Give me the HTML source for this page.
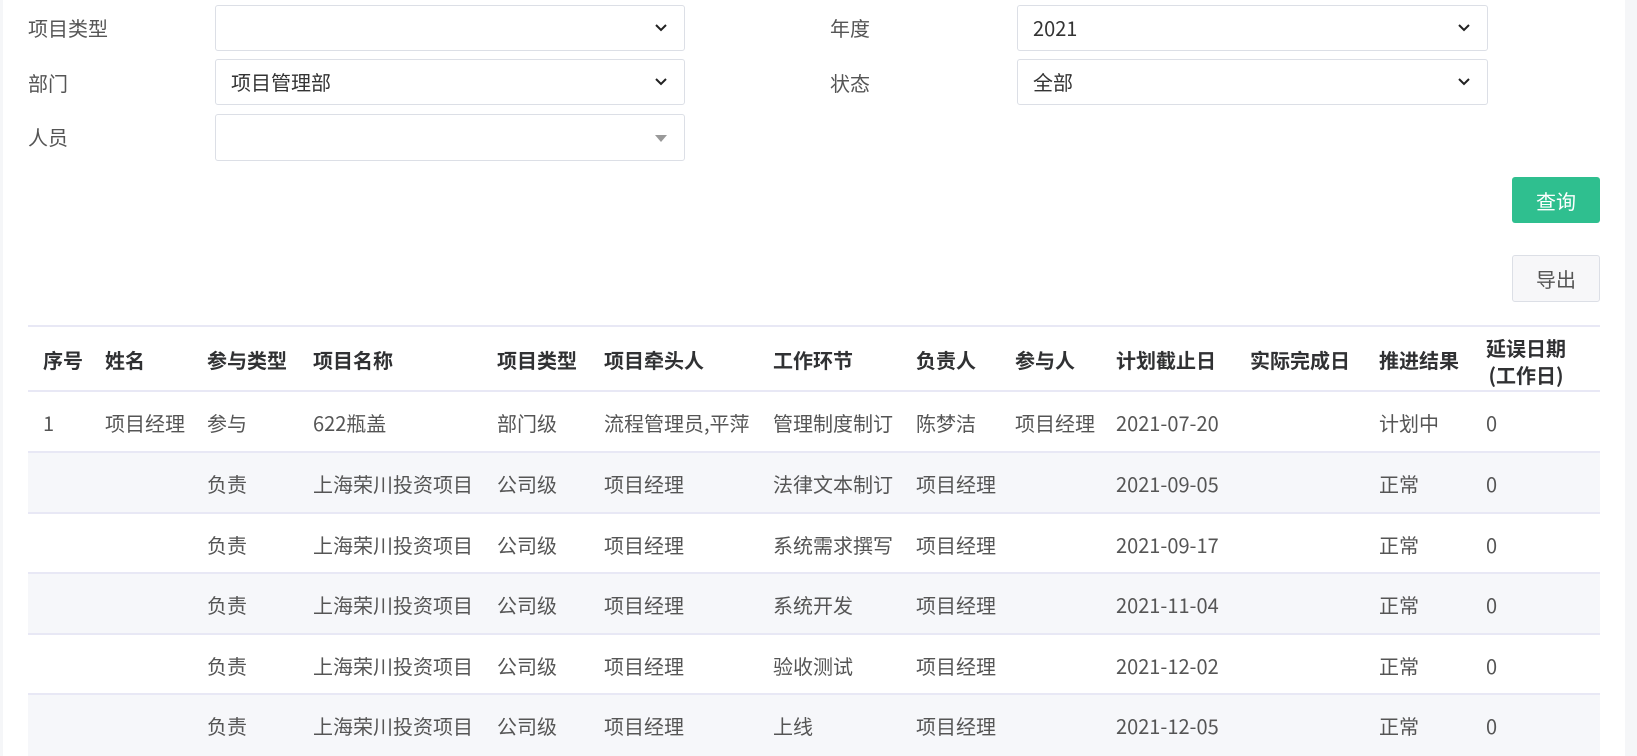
<!DOCTYPE html>
<html><head><meta charset="utf-8"><style>
*{box-sizing:border-box;margin:0;padding:0}
body{width:1637px;height:756px;overflow:hidden;background:#fff;font-family:"Noto Sans CJK SC","Liberation Sans",sans-serif;font-size:20px;color:#555;position:relative}
.abs{position:absolute}
.lbl{position:absolute;color:#555;line-height:24px}
.sel{position:absolute;border:1px solid #dcdfe6;border-radius:3px;background:#fff;color:#333;padding-left:15px;display:flex;align-items:center;line-height:24px}
.chev{position:absolute;right:16px;top:50%;margin-top:-6px}
.btn{position:absolute;border-radius:3px;display:flex;align-items:center;justify-content:center}
.row{position:absolute;left:28px;width:1572px;border-bottom:2px solid #e8e8f5}
.c{position:absolute;white-space:nowrap;line-height:24px}
.h .c{font-weight:bold;color:#303133}
</style></head><body>
<div class="abs" style="left:1625px;top:0;width:12px;height:756px;background:#f5f6f8"></div>
<div class="abs" style="left:0;top:0;width:3px;height:756px;background:#f5f6f8"></div>

<div class="lbl" style="left:28px;top:16px">项目类型</div>
<div class="sel" style="left:215px;top:5px;width:470px;height:46px"><svg class="chev" width="14" height="12" viewBox="0 0 14 12"><path d="M2 3l5 5 5-5" stroke="#222" stroke-width="2" fill="none"/></svg></div>
<div class="lbl" style="left:28px;top:71px">部门</div>
<div class="sel" style="left:215px;top:59px;width:470px;height:46px">项目管理部<svg class="chev" width="14" height="12" viewBox="0 0 14 12"><path d="M2 3l5 5 5-5" stroke="#222" stroke-width="2" fill="none"/></svg></div>
<div class="lbl" style="left:28px;top:125px">人员</div>
<div class="sel" style="left:215px;top:114px;width:470px;height:47px"><svg class="chev" width="14" height="12" viewBox="0 0 14 12"><path d="M1 3h12l-6 7z" fill="#999"/></svg></div>

<div class="lbl" style="left:830px;top:16px">年度</div>
<div class="sel" style="left:1017px;top:5px;width:471px;height:46px">2021<svg class="chev" width="14" height="12" viewBox="0 0 14 12"><path d="M2 3l5 5 5-5" stroke="#222" stroke-width="2" fill="none"/></svg></div>
<div class="lbl" style="left:830px;top:71px">状态</div>
<div class="sel" style="left:1017px;top:59px;width:471px;height:46px">全部<svg class="chev" width="14" height="12" viewBox="0 0 14 12"><path d="M2 3l5 5 5-5" stroke="#222" stroke-width="2" fill="none"/></svg></div>

<div class="btn" style="left:1512px;top:177px;width:88px;height:46px;background:#2fbf8f;color:#fff">查询</div>
<div class="btn" style="left:1512px;top:255px;width:88px;height:47px;background:#f7f7f9;border:1px solid #dcdfe6;color:#555">导出</div>

<div class="abs" style="left:28px;top:325px;width:1572px;height:2px;background:#e8e8f5"></div>
<div class="row h" style="top:327px;height:65px">
<div class="c" style="left:15px;top:21px">序号</div>
<div class="c" style="left:77px;top:21px">姓名</div>
<div class="c" style="left:179px;top:21px">参与类型</div>
<div class="c" style="left:285px;top:21px">项目名称</div>
<div class="c" style="left:469px;top:21px">项目类型</div>
<div class="c" style="left:576px;top:21px">项目牵头人</div>
<div class="c" style="left:745px;top:21px">工作环节</div>
<div class="c" style="left:888px;top:21px">负责人</div>
<div class="c" style="left:987px;top:21px">参与人</div>
<div class="c" style="left:1088px;top:21px">计划截止日</div>
<div class="c" style="left:1222px;top:21px">实际完成日</div>
<div class="c" style="left:1351px;top:21px">推进结果</div>
<div class="c" style="left:1458px;top:7px;line-height:27px;text-align:center">延误日期<br>(工作日)</div>
</div>

<div class="row" style="top:392px;height:61px;background:#fff">
<div class="c" style="left:15px;top:19px">1</div><div class="c" style="left:77px;top:19px">项目经理</div><div class="c" style="left:179px;top:19px">参与</div><div class="c" style="left:285px;top:19px">622瓶盖</div><div class="c" style="left:469px;top:19px">部门级</div><div class="c" style="left:576px;top:19px">流程管理员,平萍</div><div class="c" style="left:745px;top:19px">管理制度制订</div><div class="c" style="left:888px;top:19px">陈梦洁</div><div class="c" style="left:987px;top:19px">项目经理</div><div class="c" style="left:1088px;top:19px">2021-07-20</div><div class="c" style="left:1351px;top:19px">计划中</div><div class="c" style="left:1458px;top:19px">0</div>
</div>
<div class="row" style="top:453px;height:61px;background:#f6f7fa">
<div class="c" style="left:179px;top:19px">负责</div><div class="c" style="left:285px;top:19px">上海荣川投资项目</div><div class="c" style="left:469px;top:19px">公司级</div><div class="c" style="left:576px;top:19px">项目经理</div><div class="c" style="left:745px;top:19px">法律文本制订</div><div class="c" style="left:888px;top:19px">项目经理</div><div class="c" style="left:1088px;top:19px">2021-09-05</div><div class="c" style="left:1351px;top:19px">正常</div><div class="c" style="left:1458px;top:19px">0</div>
</div>
<div class="row" style="top:514px;height:60px;background:#fff">
<div class="c" style="left:179px;top:19px">负责</div><div class="c" style="left:285px;top:19px">上海荣川投资项目</div><div class="c" style="left:469px;top:19px">公司级</div><div class="c" style="left:576px;top:19px">项目经理</div><div class="c" style="left:745px;top:19px">系统需求撰写</div><div class="c" style="left:888px;top:19px">项目经理</div><div class="c" style="left:1088px;top:19px">2021-09-17</div><div class="c" style="left:1351px;top:19px">正常</div><div class="c" style="left:1458px;top:19px">0</div>
</div>
<div class="row" style="top:574px;height:61px;background:#f6f7fa">
<div class="c" style="left:179px;top:19px">负责</div><div class="c" style="left:285px;top:19px">上海荣川投资项目</div><div class="c" style="left:469px;top:19px">公司级</div><div class="c" style="left:576px;top:19px">项目经理</div><div class="c" style="left:745px;top:19px">系统开发</div><div class="c" style="left:888px;top:19px">项目经理</div><div class="c" style="left:1088px;top:19px">2021-11-04</div><div class="c" style="left:1351px;top:19px">正常</div><div class="c" style="left:1458px;top:19px">0</div>
</div>
<div class="row" style="top:635px;height:60px;background:#fff">
<div class="c" style="left:179px;top:19px">负责</div><div class="c" style="left:285px;top:19px">上海荣川投资项目</div><div class="c" style="left:469px;top:19px">公司级</div><div class="c" style="left:576px;top:19px">项目经理</div><div class="c" style="left:745px;top:19px">验收测试</div><div class="c" style="left:888px;top:19px">项目经理</div><div class="c" style="left:1088px;top:19px">2021-12-02</div><div class="c" style="left:1351px;top:19px">正常</div><div class="c" style="left:1458px;top:19px">0</div>
</div>
<div class="row" style="top:695px;height:61px;background:#f6f7fa;border-bottom:none">
<div class="c" style="left:179px;top:19px">负责</div><div class="c" style="left:285px;top:19px">上海荣川投资项目</div><div class="c" style="left:469px;top:19px">公司级</div><div class="c" style="left:576px;top:19px">项目经理</div><div class="c" style="left:745px;top:19px">上线</div><div class="c" style="left:888px;top:19px">项目经理</div><div class="c" style="left:1088px;top:19px">2021-12-05</div><div class="c" style="left:1351px;top:19px">正常</div><div class="c" style="left:1458px;top:19px">0</div>
</div>
</body></html>
